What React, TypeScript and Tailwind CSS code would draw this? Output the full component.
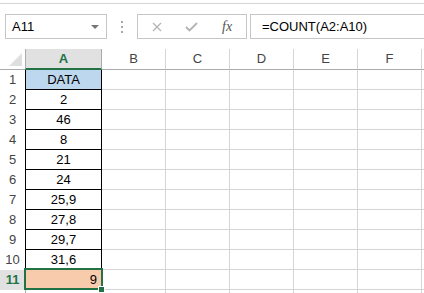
import React from 'react'

const ROWS: string[] = ['DATA', '2', '46', '8', '21', '24', '25,9', '27,8', '29,7', '31,6']
const COLS = ['B', 'C', 'D', 'E', 'F']

function RowHead({ n, active }: { n?: number; active?: boolean }) {
  return (
    <div className={`w-[25px] h-[20px] shrink-0 text-center leading-[20px] ${active ? 'bg-[#e1e1e1] text-[#217346] font-bold' : 'text-[#444]'}`}>
      {n}
    </div>
  )
}

function Blanks() {
  return (
    <>
      {COLS.map(c => (
        <div key={c} className="w-[64px] h-[20px] shrink-0 border-r border-b border-[#d4d4d4]" />
      ))}
      <div className="flex-1 h-[20px] border-b border-[#d4d4d4]" />
    </>
  )
}

export default function App() {
  return (
    <div className="w-[424px] h-[293px] overflow-hidden bg-white text-[13px] text-black" style={{ fontFamily: '"Liberation Sans", Arial, sans-serif' }}>
      {/* ribbon edge */}
      <div className="mt-[3px] border-t border-[#d5d5d5]" />

      {/* name box + formula bar */}
      <div className="flex items-center h-[25px] mt-[10px]">
        <div className="ml-[5px] w-[102px] h-[25px] border border-[#c6c6c6] flex items-center pl-[6px] pr-[6px]">
          <span className="flex-1">A11</span>
          <span className="w-0 h-0 border-l-[4px] border-r-[4px] border-t-[4px] border-l-transparent border-r-transparent border-t-[#777] mr-[1px]" />
        </div>
        <div className="w-[30px] flex flex-col items-center gap-[3px]">
          <span className="w-[2px] h-[2px] bg-[#a6a6a6]" />
          <span className="w-[2px] h-[2px] bg-[#a6a6a6]" />
          <span className="w-[2px] h-[2px] bg-[#a6a6a6]" />
        </div>
        <div className="w-[110px] h-[25px] border border-[#c6c6c6] flex items-center">
          <svg width="10" height="10" viewBox="0 0 10 10" className="ml-[14px]">
            <path d="M1 1L9 9M9 1L1 9" stroke="#b3b3b3" strokeWidth="1.2" fill="none" />
          </svg>
          <svg width="13" height="10" viewBox="0 0 13 10" className="ml-[23px]">
            <path d="M1 5L4.5 8.5L12 1" stroke="#b3b3b3" strokeWidth="1.8" fill="none" />
          </svg>
          <span className="ml-[24px] italic text-[#555] text-[14px]" style={{ fontFamily: '"Liberation Serif", serif' }}>fx</span>
        </div>
        <div className="ml-[3px] flex-1 h-[25px] border-t border-l border-b border-[#c6c6c6] flex items-center pl-[11px]">
          =COUNT(A2:A10)
        </div>
      </div>

      {/* sheet grid */}
      <div className="relative mt-[10px] text-[#444]">
        {/* column headers */}
        <div className="flex h-[21px]">
          <div className="relative w-[25px] shrink-0 border-b border-[#ababab]">
            <svg width="13" height="13" viewBox="0 0 13 13" className="absolute right-[3px] bottom-[3px]">
              <path d="M13 0L13 13L0 13Z" fill="#dfdfdf" />
            </svg>
          </div>
          <div className="w-[77px] shrink-0 bg-[#e1e1e1] border-l border-r border-[#ababab] border-b-2 border-b-[#217346] text-center leading-[19px] text-[#217346] font-bold">A</div>
          {COLS.map(c => (
            <div key={c} className="w-[64px] shrink-0 border-r border-b border-[#d4d4d4] border-b-[#ababab] text-center leading-[20px]">{c}</div>
          ))}
          <div className="flex-1 border-b border-[#ababab]" />
        </div>

        {/* rows 1-10 with black borders */}
        {ROWS.map((v, i) => (
          <div key={i} className="flex">
            <RowHead n={i + 1} />
            <div className={`w-[77px] h-[20px] shrink-0 border-l border-r border-b border-black text-center leading-[19px] text-black ${i === 0 ? 'bg-[#bdd7ee]' : ''}`}>{v}</div>
            <Blanks />
          </div>
        ))}

        {/* row 11 */}
        <div className="flex">
          <RowHead n={11} active />
          <div className="w-[77px] h-[20px] shrink-0 border-l border-[#ababab] border-b border-b-[#d4d4d4] border-r border-r-[#d4d4d4] bg-[#f8cbad] text-right pr-[4px] leading-[19px] text-black">9</div>
          <Blanks />
        </div>

        {/* row 12, mostly below the window */}
        <div className="flex">
          <RowHead />
          <div className="w-[77px] h-[20px] shrink-0 border-l border-[#ababab] border-r border-r-[#d4d4d4] border-b border-b-[#d4d4d4]" />
          <Blanks />
        </div>

        {/* selection */}
        <div className="absolute left-[24px] top-[219px] w-[79px] h-[22px] border-2 border-[#217346]" />
        <div className="absolute left-[98px] top-[237px] w-[7px] h-[7px] bg-[#217346] border border-white" />
      </div>
    </div>
  )
}
